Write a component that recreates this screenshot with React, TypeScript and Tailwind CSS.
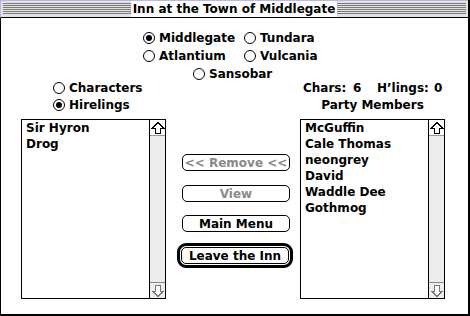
import React from "react";

function Radio({ label, checked }: { label: string; checked?: boolean }) {
  return (
    <div className="flex items-center gap-[4px]">
      <span className="w-[12px] h-[12px] rounded-full border border-black bg-white flex items-center justify-center shrink-0">
        {checked && <span className="w-[6px] h-[6px] rounded-full bg-black" />}
      </span>
      <span>{label}</span>
    </div>
  );
}

function Arrow({ down, color }: { down?: boolean; color: string }) {
  return (
    <svg width="14" height="14" viewBox="0 0 14 14" className={down ? "rotate-180" : ""}>
      <polygon
        points="7,1.5 12.5,7 9.5,7 9.5,12.5 4.5,12.5 4.5,7 1.5,7"
        fill="white"
        stroke={color}
        strokeWidth="1"
        shapeRendering="crispEdges"
      />
    </svg>
  );
}

function ListBox({ items }: { items: string[] }) {
  return (
    <div className="flex h-[180px] w-[145px] border border-black bg-white">
      <div className="flex-1 pl-[4px] flex flex-col">
        {items.map((it) => (
          <div key={it} className="h-[16px] leading-[16px] whitespace-nowrap">
            {it}
          </div>
        ))}
      </div>
      <div className="w-[16px] border-l border-black flex flex-col">
        <div className="h-[16px] border-b border-[#999] bg-white flex items-center justify-center">
          <Arrow color="#000" />
        </div>
        <div className="flex-1 bg-[#ececec]" />
        <div className="h-[16px] border-t border-[#888] bg-[#eeeeee] flex items-center justify-center">
          <Arrow down color="#777" />
        </div>
      </div>
    </div>
  );
}

function Button({ label, disabled }: { label: string; disabled?: boolean }) {
  return (
    <div
      className={
        "w-[108px] h-[17px] border border-black rounded-[5px] flex items-center justify-center leading-none " +
        (disabled ? "text-[#8a8a8a]" : "text-black")
      }
    >
      {label}
    </div>
  );
}

const Stripes = ({ className }: { className: string }) => (
  <div
    className={
      "h-[12px] bg-[repeating-linear-gradient(to_bottom,#7b7b7b_0px,#7b7b7b_1px,#e2e2e2_1px,#e2e2e2_2px)] " +
      className
    }
  />
);

export default function App() {
  return (
    <div className="w-[470px] h-[316px] bg-white border-r-2 border-b-2 border-black flex flex-col font-['DejaVu_Sans',sans-serif] font-bold text-[12px] text-black overflow-hidden">
      {/* Title bar */}
      <div className="h-[18px] shrink-0 bg-[#e2e2e2] border-t border-l border-[#b8b8e0] border-b border-b-black flex items-center">
        <Stripes className="ml-[2px] w-[128px]" />
        <div className="w-[206px] bg-white h-[16px] flex items-center justify-center leading-none">
          Inn at the Town of Middlegate
        </div>
        <Stripes className="flex-1 mr-[2px]" />
      </div>

      {/* Content */}
      <div className="flex-1 border-l border-black flex flex-col">
        <div className="pt-[11px]">
          <div className="h-[18px] ml-[142px] grid grid-cols-[101px_auto] items-center">
            <Radio label="Middlegate" checked />
            <Radio label="Tundara" />
          </div>
          <div className="h-[18px] ml-[142px] grid grid-cols-[101px_auto] items-center">
            <Radio label="Atlantium" />
            <Radio label="Vulcania" />
          </div>
          <div className="h-[17px] ml-[192px] flex items-center">
            <Radio label="Sansobar" />
          </div>
        </div>

        <div className="flex pl-[20px] -mt-[3px]">
          {/* left */}
          <div className="w-[145px] flex flex-col">
            <div className="pl-[32px]">
              <div className="h-[17px] flex items-center">
                <Radio label="Characters" />
              </div>
              <div className="h-[17px] flex items-center">
                <Radio label="Hirelings" checked />
              </div>
            </div>
            <div className="mt-[6px]">
              <ListBox items={["Sir Hyron", "Drog"]} />
            </div>
          </div>

          {/* middle */}
          <div className="w-[134px] flex flex-col pt-[75px]">
            <div className="ml-[16px]">
              <Button label="<< Remove <<" disabled />
            </div>
            <div className="ml-[16px] mt-[14px]">
              <Button label="View" disabled />
            </div>
            <div className="ml-[16px] mt-[13px]">
              <Button label="Main Menu" />
            </div>
            <div className="ml-[11px] mt-[11px] w-[116px] border-[3px] border-black rounded-[9px] p-[1px]">
              <Button label="Leave the Inn" />
            </div>
          </div>

          {/* right */}
          <div className="w-[145px] flex flex-col">
            <div className="h-[17px] flex items-center pl-[3px] whitespace-nowrap">
              <span className="w-[50px]">Chars:</span>
              <span className="w-[24px]">6</span>
              <span className="w-[57px]">H’lings:</span>
              <span>0</span>
            </div>
            <div className="h-[17px] flex items-center justify-center">Party Members</div>
            <div className="mt-[6px]">
              <ListBox
                items={["McGuffin", "Cale Thomas", "neongrey", "David", "Waddle Dee", "Gothmog"]}
              />
            </div>
          </div>
        </div>
      </div>
    </div>
  );
}
